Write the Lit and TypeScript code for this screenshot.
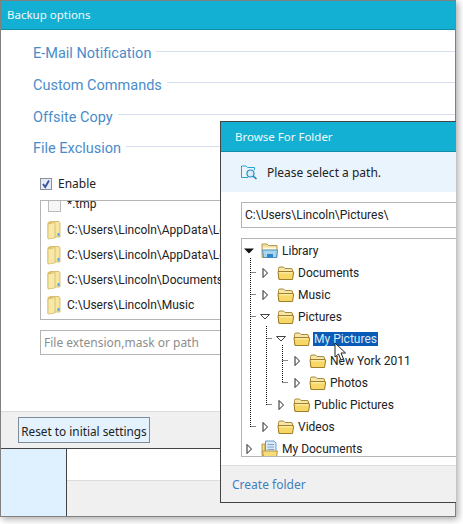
import { LitElement, html, css, svg } from "lit";
import { customElement } from "lit/decorators.js";

const folder = () => html`<svg class="fi" width="18" height="16" viewBox="0 0 18 16">
  <path d="M1.5 3.5 Q1.5 2 3 2 H6.5 L8 3.5 H14 Q15.5 3.5 15.5 5 V13.5 H1.5 Z" fill="#f6e7a8" stroke="#a88a3c"/>
  <path d="M1 6.5 H16 Q17 6.500 16.600 8 L15.500 14.500 H2 L1 7.500 Z" fill="#f7d765" stroke="#a07f2c"/>
  <path d="M2.500 7.800 H15" stroke="#fdf3c0"/>
</svg>`;

const openFolder = () => html`<svg class="fi" width="14" height="20" viewBox="0 0 14 20">
  <path d="M1 2.500 L4 1.500 V17 L1 18 Z" fill="#f0d675" stroke="#c8a94e" stroke-width=".7"/>
  <path d="M4 1.500 H12 L13 3 V17 H4 Z" fill="#f7e6a0" stroke="#c8a94e" stroke-width=".7"/>
  <path d="M1 4 L8 2.500 V18 L1 19 Z" fill="#f9e9a8" stroke="#d0b25a" stroke-width=".7"/>
  <path d="M10.500 13 h2 v3 h-2z" fill="#5ba6dd"/>
</svg>`;

const libFolder = () => html`<svg class="fi" width="18" height="18" viewBox="0 0 18 18">
  <path d="M1 2 H6 L7.500 3.500 H16 V15.500 H1 Z" fill="#f3e0a0" stroke="#b39a55"/>
  <path d="M2 5.500 H15 V9 H2 Z" fill="#fff8dc"/>
  <path d="M1.500 8 H16.500 L15.500 15.500 H2.500 Z" fill="#a9d4ee" stroke="#4d94c4"/>
  <path d="M6 15.500 V12 H12 V15.500 Z" fill="#2f86c4"/>
</svg>`;

const docFolder = () => html`<svg class="fi" width="18" height="18" viewBox="0 0 18 18">
  <path d="M1 4 H4 V15.500 H1 Z" fill="#f4dc85" stroke="#b79a4c"/>
  <path d="M4.500 1 H13 L15 3 V15 H4.500 Z" fill="#dbe9f8" stroke="#6e9cc8"/>
  <path d="M6.500 4.500 H13 M6.500 7 H13 M6.500 9.500 H13" stroke="#7aa4cc"/>
  <path d="M1.500 11 H16.500 L15.500 16.500 H2.500 Z" fill="#f7dc78" stroke="#b79a4c"/>
</svg>`;

type Row = { label: string; depth: number; arrow: "closed" | "open" | "filled"; icon: "folder" | "lib" | "doc"; selected?: boolean };
const rows: Row[] = [
  { label: "Library", depth: 0, arrow: "filled", icon: "lib" },
  { label: "Documents", depth: 1, arrow: "closed", icon: "folder" },
  { label: "Music", depth: 1, arrow: "closed", icon: "folder" },
  { label: "Pictures", depth: 1, arrow: "open", icon: "folder" },
  { label: "My Pictures", depth: 2, arrow: "open", icon: "folder", selected: true },
  { label: "New York 2011", depth: 3, arrow: "closed", icon: "folder" },
  { label: "Photos", depth: 3, arrow: "closed", icon: "folder" },
  { label: "Public Pictures", depth: 2, arrow: "closed", icon: "folder" },
  { label: "Videos", depth: 1, arrow: "closed", icon: "folder" },
  { label: "My Documents", depth: 0, arrow: "closed", icon: "doc" },
];

const arrow = (k: Row["arrow"]) => {
  if (k === "filled") return html`<svg class="ar" width="12" height="10" viewBox="0 0 12 10"><path d="M1 2.500 H11 L6 7.500 Z" fill="#111"/></svg>`;
  if (k === "open") return html`<svg class="ar" width="12" height="10" viewBox="0 0 12 10"><path d="M1.500 2.500 H10.500 L6 7 Z" fill="#fff" stroke="#444"/></svg>`;
  return html`<svg class="ar" width="12" height="12" viewBox="0 0 12 12"><path d="M4 1.500 L8.500 6 L4 10.500 Z" fill="#fff" stroke="#222"/></svg>`;
};

const icon = (k: Row["icon"]) => (k === "lib" ? libFolder() : k === "doc" ? docFolder() : folder());

const guides = svg`
  <path d="M8.500 19 V188 M8.500 33.500 H14 M8.500 55.500 H14 M8.500 77.500 H14 M8.500 187.500 H14
           M24.500 87 V166 M24.500 99.500 H30 M24.500 165.500 H30
           M40.500 106 V144 M40.500 121.500 H46 M40.500 143.500 H46"
        fill="none" stroke="#111" stroke-dasharray="1 1"/>`;

@customElement("app-root")
export class AppRoot extends LitElement {
  static styles = css`
    :host { display: block; width: 463px; height: 524px; font-family: "Noto Sans", "DejaVu Sans", sans-serif; font-size: 12px; color: #222; background: #fff; overflow: hidden; }
    .win { position: relative; box-sizing: border-box; width: 456px; height: 517px; border: 1px solid #808080; background: #fff; display: flex; flex-direction: column; box-shadow: 2px 2px 7px rgba(0,0,0,.35); }
    .title { flex: none; box-sizing: border-box; height: 29px; background: #14b0d3; border-bottom: 1px solid #0e8ea8; padding: 0 6px; line-height: 28px; font-size: 11.500px; color: #f2fbfd; }
    .body { flex: 1; min-height: 0; padding: 7px 0 0 32px; display: flex; flex-direction: column; overflow: hidden; }
    .sec { flex: none; height: 31.670px; display: flex; align-items: center; gap: 5px; color: #4a8cca; font-family: Roboto, sans-serif; font-size: 14.500px; }
    .sec span { padding-top: 2px; }
    .sec i { flex: 1; height: 1px; background: #d7deee; margin-top: -3px; }
    .enable { display: flex; align-items: center; gap: 6px; margin: 13px 0 0 7px; height: 14px; }
    .cb { box-sizing: border-box; width: 12px; height: 12px; border: 1px solid #8a8f99; background: #e6ecf6; display: flex; }
    .list { flex: none; box-sizing: border-box; width: 400px; height: 120px; margin: 9px 0 0 7px; border: 1px solid #b4b4b4; overflow: hidden; padding-left: 6px; font-family: Roboto, sans-serif; }
    .li { height: 25px; display: flex; align-items: center; gap: 6px; white-space: nowrap; }
    .li.first { margin-top: -9px; height: 25.500px; }
    .li .box { box-sizing: border-box; width: 13px; height: 13px; border: 1px solid #bbb; background: #f6f6f6; margin: 3px 0 0 1px; }
    .filter { flex: none; box-sizing: border-box; width: 400px; height: 25px; margin: 10px 0 0 7px; border: 1px solid #b4b4b4; line-height: 23px; padding-left: 3px; color: #8d8d8d; }
    .foot { flex: none; box-sizing: border-box; height: 38px; background: #f0f0f0; border-top: 1px solid #dcdcdc; border-bottom: 1px solid #444; padding: 5px 0 0 17px; }
    .btn { box-sizing: border-box; width: 132px; height: 26px; background: #e4f2fe; border: 1px solid #7e8c9c; font: inherit; font-size: 11.800px; color: #222; padding: 1px 0 0; line-height: 24px; text-align: center; display: block; }
    .bottom { flex: none; height: 67px; display: flex; background: #f0f0f0; }
    .side { width: 65px; background: #dff0ff; border-right: 1px solid #444; }
    .rest { flex: 1; }
    .rest div { height: 31px; background: #fff; border-bottom: 1px solid #dcdcdc; }

    .dlg { position: absolute; left: 219px; top: 120px; right: -1px; height: 382px; box-sizing: border-box; border: 1px solid #444; border-right: none; background: #fff; display: flex; flex-direction: column; }
    .dt { flex: none; box-sizing: border-box; height: 30px; background: #14b0d3; color: #f2fbfd; line-height: 29px; padding-left: 14px; font-size: 11.500px; border-bottom: 1px solid #0e8ea8; }
    .hint { flex: none; height: 40px; background: #eaf4fd; display: flex; align-items: center; gap: 9px; padding-left: 20px; }
    .path { flex: none; box-sizing: border-box; height: 26px; margin: 10px 0 0 20px; border: 1px solid #b4b4b4; border-right: none; line-height: 24px; padding-left: 3px; font-family: Roboto, sans-serif; }
    .tree { position: relative; flex: none; box-sizing: border-box; height: 219px; margin: 10px 0 0 20px; border: 1px solid #b4b4b4; border-right: none; overflow: hidden; padding-top: 1px; font-family: Roboto, sans-serif; }
    .tree svg.lines { position: absolute; left: 0; top: 0; }
    .tr { box-sizing: border-box; height: 22px; display: flex; align-items: center; white-space: nowrap; }
    .tr .slot { flex: none; width: 12px; display: flex; justify-content: center; }
    .tr .ar { flex: none; width: 12px; transform: translateX(-1px); }
    .tr .fi { flex: none; margin-left: 5px; }
    .lbl { margin-left: 2px; padding: 0 1px; line-height: 14px; }
    .lbl.sel { background: #0a5bb5; color: #d9e8f6; }
    .df { flex: none; margin-top: 8px; height: 37px; box-sizing: border-box; background: #f0f0f0; border-top: 1px solid #dcdcdc; color: #3f7fc0; padding-left: 11px; line-height: 37px; }
    .cursor { position: absolute; left: 333px; top: 341px; }
  `;

  render() {
    return html`<div class="win">
      <div class="title">Backup options</div>
      <div class="body">
        ${["E-Mail Notification", "Custom Commands", "Offsite Copy", "File Exclusion"].map(
          (s) => html`<div class="sec"><span>${s}</span><i></i></div>`
        )}
        <div class="enable">
          <span class="cb"><svg width="10" height="10" viewBox="0 0 10 10"><path d="M2 5 L4.200 8 L8 1.500" fill="none" stroke="#3c4f9c" stroke-width="1.800"/></svg></span>
          <span>Enable</span>
        </div>
        <div class="list">
          <div class="li first"><span class="box"></span><span>*.tmp</span></div>
          ${["C:\\Users\\Lincoln\\AppData\\Local\\Temp", "C:\\Users\\Lincoln\\AppData\\Local\\Cache", "C:\\Users\\Lincoln\\Documents\\Temp", "C:\\Users\\Lincoln\\Music"].map(
            (p) => html`<div class="li">${openFolder()}<span>${p}</span></div>`
          )}
        </div>
        <div class="filter">File extension,mask or path</div>
      </div>
      <div class="foot"><button class="btn">Reset to initial settings</button></div>
      <div class="bottom">
        <div class="side"></div>
        <div class="rest"><div></div></div>
      </div>

      <div class="dlg">
        <div class="dt">Browse For Folder</div>
        <div class="hint">
          <svg width="17" height="15" viewBox="0 0 17 15"><path d="M.500 12.500 V1 H5 L6.500 2.500 H13.500 V5" fill="none" stroke="#2aa5cf"/><path d="M.500 12.500 H7" stroke="#2aa5cf"/><circle cx="9.500" cy="8.500" r="3.500" fill="#d8eef8" stroke="#2a8fc0" stroke-width="1.200"/><path d="M12 11 L15.500 14" stroke="#1f7fb0" stroke-width="1.600"/></svg>
          <span>Please select a path.</span>
        </div>
        <div class="path">C:\\Users\\Lincoln\\Pictures\\</div>
        <div class="tree">
          <svg class="lines" width="214" height="219">${guides}</svg>
          ${rows.map(
            (r) => html`<div class="tr" style="padding-left:${r.depth * 16 + 2}px">
              <span class="slot">${arrow(r.arrow)}</span>
              ${icon(r.icon)}
              <span class="lbl ${r.selected ? "sel" : ""}">${r.label}</span>
            </div>`
          )}
        </div>
        <div class="df">Create folder</div>
      </div>

      <svg class="cursor" width="14" height="20" viewBox="0 0 14 20"><path d="M1 1 V15 L4.500 12 L7 18 L9.500 17 L7 11 H11.500 Z" fill="#fff" stroke="#222" stroke-width="1"/></svg>
    </div>`;
  }
}
